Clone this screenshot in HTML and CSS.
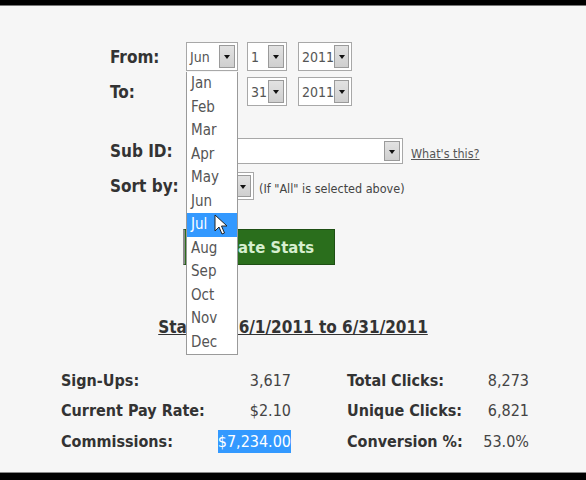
FILE: index.html
```html
<!DOCTYPE html>
<html>
<head>
<meta charset="utf-8">
<link rel="stylesheet" href="styles.css">
</head>
<body>
<div class="bar top"></div>
<div class="page">
  <div class="form">
    <div class="row r-from">
      <div class="label">From:</div>
      <div class="controls">
        <div class="select w-month"><span class="val">Jun</span><span class="arrow"></span></div>
        <div class="select w-day"><span class="val">1</span><span class="arrow"></span></div>
        <div class="select w-year"><span class="val">2011</span><span class="arrow"></span></div>
      </div>
    </div>
    <div class="row r-to">
      <div class="label">To:</div>
      <div class="controls">
        <div class="select w-month"><span class="val">Jun</span><span class="arrow"></span></div>
        <div class="select w-day"><span class="val">31</span><span class="arrow"></span></div>
        <div class="select w-year"><span class="val">2011</span><span class="arrow"></span></div>
      </div>
    </div>
    <div class="row r-sub">
      <div class="label">Sub ID:</div>
      <div class="controls">
        <div class="select w-sub"><span class="val"></span><span class="arrow"></span></div>
        <a class="help" href="#">What's this?</a>
      </div>
    </div>
    <div class="row r-sort">
      <div class="label">Sort by:</div>
      <div class="controls">
        <div class="select w-sort"><span class="val">All</span><span class="arrow"></span></div>
        <span class="note">(If "All" is selected above)</span>
      </div>
    </div>
    <div class="btn-row">
      <button class="btn">Update Stats</button>
    </div>

    <ul class="dropdown">
      <li>Jan</li><li>Feb</li><li>Mar</li><li>Apr</li><li>May</li><li>Jun</li>
      <li class="hl">Jul</li><li>Aug</li><li>Sep</li><li>Oct</li><li>Nov</li><li>Dec</li>
    </ul>
    <svg class="cursor" width="14" height="22" viewBox="0 0 14 22">
      <path d="M1 1 L1 17 L5 13 L8 20 L10.5 19 L7.5 12 L13 12 Z" fill="#fff" stroke="#222" stroke-width="1"/>
    </svg>
  </div>

  <h2 class="title">Stats for 6/1/2011 to 6/31/2011</h2>

  <div class="stats">
    <div class="k">Sign-Ups:</div><div class="v">3,617</div>
    <div class="k k2">Total Clicks:</div><div class="v">8,273</div>
    <div class="k">Current Pay Rate:</div><div class="v">$2.10</div>
    <div class="k k2">Unique Clicks:</div><div class="v">6,821</div>
    <div class="k">Commissions:</div><div class="v"><span class="sel">$7,234.00</span></div>
    <div class="k k2">Conversion %:</div><div class="v">53.0%</div>
  </div>
</div>
<div class="bar bottom"></div>
</body>
</html>
```
FILE: styles.css
```css
* { box-sizing: border-box; }
html, body { margin: 0; padding: 0; }
body {
  width: 586px;
  height: 480px;
  background: #000;
  font-family: "DejaVu Sans Condensed", "DejaVu Sans", sans-serif;
  font-stretch: condensed;
  color: #333;
  overflow: hidden;
}
.bar.top { height: 6px; background: #000; border-bottom: 1px solid #777; }
.bar.bottom { height: 8px; background: #000; border-top: 1px solid #888; }
.page {
  height: 466px;
  background: #f6f6f6;
  padding-top: 36px;
}
.form { position: relative; padding-left: 110px; }
.row { display: flex; align-items: center; }
.label {
  width: 76px;
  font-weight: bold;
  font-size: 17px;
  color: #333;
}
.controls { display: flex; align-items: center; gap: 9px; }
.r-to { margin-top: 6px; }
.r-sub { margin-top: 32px; }
.r-sort { margin-top: 8px; }

.select {
  height: 29px;
  background: #fff;
  border: 1px solid #a8a8a8;
  display: flex;
  align-items: center;
  justify-content: space-between;
  padding: 2px 2px 2px 3px;
}
.select .val { font-size: 14px; color: #555; }
.select .arrow {
  width: 16px;
  height: 100%;
  background: linear-gradient(#e2e2e2, #cfcfcf);
  border: 1px solid #9a9a9a;
  position: relative;
}
.select .arrow::after {
  content: "";
  position: absolute;
  left: 4px; top: 9px;
  border-left: 3.5px solid transparent;
  border-right: 3.5px solid transparent;
  border-top: 4px solid #111;
}
.w-month { width: 52px; }
.w-day { width: 40px; }
.w-year { width: 54px; margin-left: 2px; }
.w-sub { width: 217px; height: 26px; }
.w-sort { width: 68px; height: 28px; }
.w-sub .arrow::after { top: 8px; }
.help {
  font-size: 12.5px;
  color: #555;
  text-decoration: underline;
  margin-left: -1px;
  position: relative;
  top: 2px;
}
.note { font-size: 12.5px; color: #444; margin-left: -4px; position: relative; top: 2px; }

.btn-row { margin-top: 29px; padding-left: 73px; }
.btn {
  width: 152px;
  height: 36px;
  background: #2a6e1c;
  border: 1px solid #1e4f14;
  border-left: 2px solid #8a8a8a;
  color: #d6efcf;
  font-family: inherit;
  font-stretch: condensed;
  font-weight: bold;
  font-size: 16.5px;
  padding: 0;
}

.dropdown {
  position: absolute;
  left: 186px;
  top: 30px;
  width: 52px;
  margin: 0;
  padding: 0;
  list-style: none;
  background: #fff;
  border: 1px solid #9a9a9a;
  border-top: none;
}
.dropdown li {
  height: 23.5px;
  line-height: 23.5px;
  padding-left: 4px;
  font-size: 15px;
  color: #555;
}
.dropdown li.hl { background: #3399ff; color: #fff; }
.cursor { position: absolute; left: 214px; top: 172px; }

.title {
  margin: 52px 0 0;
  text-align: center;
  font-size: 17px;
  line-height: 20px;
  font-weight: bold;
  text-decoration: underline;
  color: #333;
}

.stats {
  margin-top: 28px;
  padding-left: 61px;
  display: grid;
  grid-template-columns: 150px 80px 186px 52px;
  grid-auto-rows: 30.5px;
  align-items: center;
  font-size: 16px;
}
.stats .k { font-weight: bold; color: #333; }
.stats .k2 { padding-left: 56px; }
.stats .v { text-align: right; color: #444; }
.sel { background: #3399ff; color: #fff; padding: 2px 0; }
```
